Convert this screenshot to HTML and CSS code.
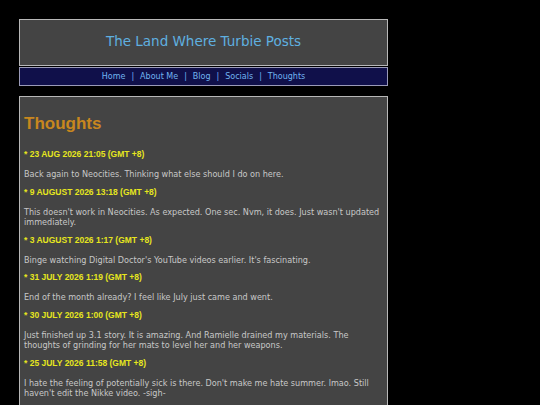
FILE: index.html
```html
<!DOCTYPE html>
<html>
<head>
<meta charset="utf-8">
<link rel="stylesheet" href="styles.css">
</head>
<body>
<div class="page">
  <header class="header">
    <h1 class="title">The Land Where Turbie Posts</h1>
  </header>
  <nav class="nav">
    <a href="#">Home</a><span class="sep">|</span><a href="#">About Me</a><span class="sep">|</span><a href="#">Blog</a><span class="sep">|</span><a href="#">Socials</a><span class="sep">|</span><a href="#">Thoughts</a>
  </nav>
  <main class="main">
    <h2 class="heading">Thoughts</h2>
    <div class="date">* 23 Aug 2026 21:05 (GMT +8)</div>
    <p class="post">Back again to Neocities. Thinking what else should I do on here.</p>
    <div class="date">* 9 August 2026 13:18 (GMT +8)</div>
    <p class="post">This doesn't work in Neocities. As expected. One sec. Nvm, it does. Just wasn't updated immediately.</p>
    <div class="date">* 3 August 2026 1:17 (GMT +8)</div>
    <p class="post">Binge watching Digital Doctor's YouTube videos earlier. It's fascinating.</p>
    <div class="date">* 31 July 2026 1:19 (GMT +8)</div>
    <p class="post">End of the month already? I feel like July just came and went.</p>
    <div class="date">* 30 July 2026 1:00 (GMT +8)</div>
    <p class="post">Just finished up 3.1 story. It is amazing. And Ramielle drained my materials. The thoughts of grinding for her mats to level her and her weapons.</p>
    <div class="date">* 25 July 2026 11:58 (GMT +8)</div>
    <p class="post">I hate the feeling of potentially sick is there. Don't make me hate summer. lmao. Still haven't edit the Nikke video. -sigh-</p>
  </main>
</div>
</body>
</html>
```
FILE: styles.css
```css
html, body {
  margin: 0;
  padding: 0;
  background: #000;
}
.page {
  width: 369px;
  padding: 19px 0 0 19px;
  font-family: "DejaVu Sans", Verdana, sans-serif;
}
.header {
  background: #444444;
  border: 1px solid #b8b8b8;
  height: 42px;
  padding-bottom: 3px;
  display: flex;
  align-items: center;
  justify-content: center;
}
.title {
  margin: 0;
  font-weight: normal;
  font-size: 13.5px;
  color: #5fb0e0;
}
.nav {
  margin-top: 1px;
  background: #10104a;
  border: 1px solid #9a9ab8;
  height: 17px;
  display: flex;
  align-items: center;
  justify-content: center;
  font-size: 8px;
}
.nav a {
  color: #70b4f0;
  text-decoration: none;
}
.nav .sep {
  color: #70b4f0;
  margin: 0 6px;
}
.main {
  margin-top: 10px;
  background: #444444;
  border: 1px solid #b8b8b8;
  padding: 17px 5px 10px 4px;
  min-height: 300px;
}
.heading {
  margin: 0 0 15px;
  font-family: "Liberation Sans", Arial, sans-serif;
  font-weight: bold;
  font-size: 17px;
  line-height: 20px;
  color: #c8871e;
}
.date {
  font-family: "Liberation Sans", Arial, sans-serif;
  font-weight: bold;
  font-size: 8.5px;
  line-height: 10px;
  text-transform: uppercase;
  color: #e6e61e;
  margin: 0 0 10px;
}
.post {
  margin: 0 0 7px;
  font-size: 8.1px;
  line-height: 10.5px;
  color: #c8c8c8;
}
```
